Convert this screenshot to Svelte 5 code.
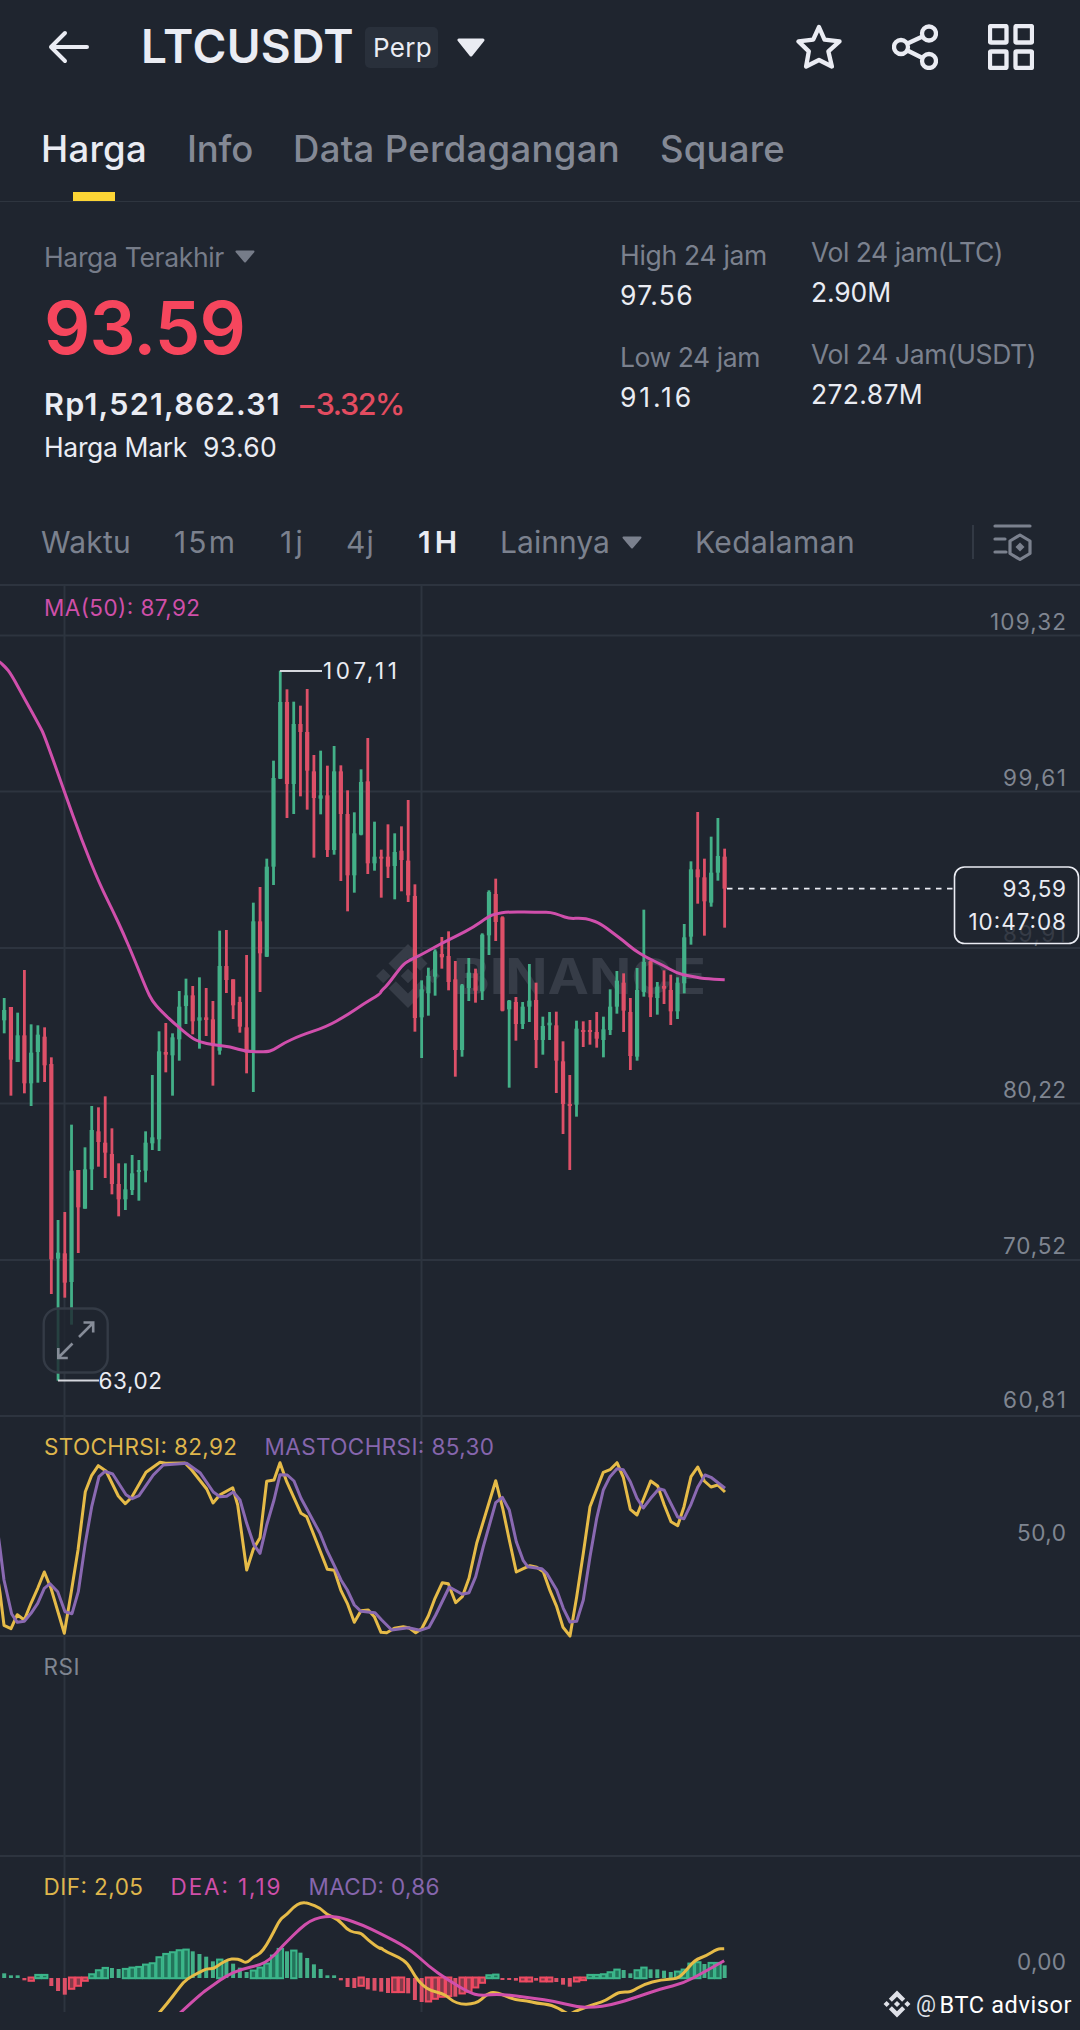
<script>
  // Spreads the glyphs of a label so that it takes exactly `width` pixels.
  function fit(node, width) {
    const count = [...node.textContent].length;
    const natural = node.getBoundingClientRect().width;
    const gap = (width - natural) / count;
    node.style.letterSpacing = `${gap}px`;
  }

  const tabs = [
    { label: 'Harga', width: 106, active: true },
    { label: 'Info', width: 66 },
    { label: 'Data Perdagangan', width: 327 },
    { label: 'Square', width: 125 }
  ];

  const stats = [
    [
      { label: 'High 24 jam', lw: 147, value: '97.56', vw: 74 },
      { label: 'Low 24 jam', lw: 140, value: '91.16', vw: 74 }
    ],
    [
      { label: 'Vol 24 jam(LTC)', lw: 192, value: '2.90M', vw: 80 },
      { label: 'Vol 24 Jam(USDT)', lw: 225, value: '272.87M', vw: 112 }
    ]
  ];

  // Candles: [high, body top, body bottom, low, up?]; y is in thirds of a pixel from `base`.
  const STEP = 6.733;
  const xAt = (i) => 4.2 + i * STEP;
  const groups = [
    [960, [
      [114,150,181,220,1],[141,141,299,407,0],[158,226,306,306,1],[30,226,370,400,0],[193,278,370,438,1],
      [196,224,276,368,1],[202,230,316,366,0],[292,312,898,1002,0],[780,878,896,1262,1],[756,880,968,1013,0],
      [494,632,966,1094,1],[630,630,742,879,0],[562,628,746,746,1],[438,510,628,690,1],[442,514,546,620,0],
      [409,548,578,654,0],[505,582,672,703,0],[610,672,718,769,0],[610,688,718,750,1],[585,640,690,705,1],
      [600,630,636,722,1],[514,548,632,667,1],[345,532,550,570,1],[214,274,538,573,1],[189,276,284,337,0],
      [220,232,286,407,1],[93,140,238,302,1],[56,106,138,192,1],[78,106,184,223,0],[52,172,182,266,1],
      [84,172,180,228,0],[123,178,256,377,0]
    ]],
    [580, [
      [1052,1158,1412,1424,1],[1050,1158,1200,1239,0],[1198,1198,1276,1317,0],[1250,1266,1340,1358,0],
      [1125,1342,1418,1480,0],[968,1024,1414,1536,1],[921,1024,1120,1236,0],[836,860,1130,1131,1],
      [542,594,860,915,1],[272,366,596,597,1],[328,366,612,714,0],[365,432,612,702,1],[377,432,456,649,0],
      [327,456,572,689,0],[525,574,654,833,0],[512,646,656,703,1],[557,646,810,831,0],[498,574,810,824,1],
      [556,574,702,903,0],[631,702,886,994,0],[697,760,886,938,1],[568,606,764,766,1],[474,604,850,882,0],
      [725,830,850,872,1]
    ]],
    [640, [
      [629,650,656,773,0],[553,650,680,714,0],[580,636,678,778,1],[559,632,660,754,0],[480,662,766,786,0],
      [733,768,1134,1175,0],[1021,1048,1132,1254,1],[983,1008,1060,1127,1],[928,934,1010,1067,1],
      [891,942,952,986,0],[874,948,1026,1051,0],[963,1018,1230,1310,0],[1032,1036,1230,1250,1],
      [954,998,1044,1083,1],[986,1000,1052,1088,0],[880,884,1054,1080,1],[751,756,886,945,1],
      [716,762,846,903,0],[829,832,1112,1114,0]
    ]],
    [840, [
      [480,482,508,743,1],[471,486,552,602,0],[486,500,552,567,1],[372,482,500,546,1],[428,480,600,684,0],
      [530,558,600,644,1],[516,548,556,600,1],[515,556,662,759,0],[604,664,792,882,0],[705,792,796,990,0],
      [542,566,794,830,1],[544,570,576,621,0],[540,570,576,614,0],[516,576,596,623,0],[530,568,600,652,1],
      [448,500,570,585,1],[393,422,500,521,1],[400,428,512,576,0],[474,516,648,690,0],[384,450,650,662,1],
      [209,366,456,470,1],[362,364,472,531,0],[426,440,474,524,1],[391,438,446,492,0],[404,450,514,555,0],
      [412,428,514,537,1],[252,292,430,460,1],[64,88,290,314,1],[-84,88,112,191,0],[56,112,184,287,0],
      [-10,98,188,200,1],[-66,48,98,122,1],[26,50,146,263,0]
    ]]
  ];
  const candles = groups
    .flatMap(([base, rows]) =>
      rows.map(([h, t, b, l, up]) => ({ h: base + h / 3, t: base + t / 3, b: base + b / 3, l: base + l / 3, up }))
    )
    .map((c, i) => ({ ...c, x: xAt(i) }));

  // Histogram heights in thirds of a pixel; `h` marks a hollow bar.
  const macd = (
    '14 8 8 -7 -12h 12h 12h -24 -39 -50 -36h -27h -12h 14h 26h 33h 30 27 30h 34h 36h 43h 47h 65h 75h 80h 86h 88h ' +
    '80 72 64 50 58h 54 43 31 18 25h 34h 46h 70h 90h 80 85h 76 60 41 27 8 8 -7 -27 -30 -27h -34 -38 -41 -45 -46h ' +
    '-46h -46 -66 -72 -74h -66h -60h -58h -56 -50h -45h -32h -18h 11h 13h -6 -6 -8 -14h -14h -8 -14h -14h -12 -20 ' +
    '-26 -14h -10h 12h 12h 14h 20h 28h 24 14 26h 34h 26 26 22 18 22h 28h 46h 50h 42 48h 48h 38'
  )
    .split(' ')
    .map((s, i) => ({ v: parseFloat(s) / 3, hollow: s.endsWith('h'), x: xAt(i) }));

  // Joins series segments [x origin, y origin, x scale, points] into one path.
  function line(segments, smooth) {
    const pts = segments.flatMap(([ox, oy, sx, text]) =>
      text.split(' ').map((p) => {
        const [x, y] = p.split(',').map(Number);
        return [ox + x / sx, oy + y / 3];
      })
    );
    let d = `M${pts[0][0].toFixed(1)} ${pts[0][1].toFixed(1)}`;
    for (let i = 1; i < pts.length; i++) {
      const [x, y] = pts[i];
      if (!smooth || i === pts.length - 1) {
        d += `L${x.toFixed(1)} ${y.toFixed(1)}`;
      } else {
        const mx = (x + pts[i + 1][0]) / 2;
        const my = (y + pts[i + 1][1]) / 2;
        d += `Q${x.toFixed(1)} ${y.toFixed(1)} ${mx.toFixed(1)} ${my.toFixed(1)}`;
      }
    }
    return d;
  }

  const ma = line([
    [0, 580, 3, '-6,243 0,247 15,260 33,282 73,355 120,440 133,466 193,634 245,780 300,915 340,995 370,1060 400,1130 440,1230 457,1263 480,1290 520,1328 575,1374 600,1386 640,1395 690,1400 740,1415 800,1416 820,1410 850,1390 900,1367 980,1340 1040,1306 1090,1272 1140,1242'],
    [240, 640, 3, '423,1054 445,1032 480,984 500,965 544,944 605,910 650,888 700,862 745,830 767,821 805,815 900,817'],
    [400, 840, 3, '450,216 480,226 508,236 545,234 570,239 600,250 640,280 670,302 700,328 740,353 790,376 830,400 870,408 910,416 974,419']
  ], true);
  const stoch = line([
    [0, 1410, 3, '-6,510 0,548 12,646 33,656 52,614 73,630 93,580 113,535 133,486 153,535 193,670 214,545 234,420 256,245 275,196 295,167 318,183 355,258 376,281 395,262 438,187 480,157 497,160 555,159 575,180 620,237 639,279 660,254 698,233 713,285 740,480 760,418 780,383 800,214 822,210 840,158 860,215 903,310 920,320 982,478 1003,481 1023,542 1042,580 1063,637 1083,602 1105,600 1123,620 1143,667'],
    [380, 1410, 3, '20,668 43,655 70,650 88,654 107,668 125,656 145,618 165,565 187,518 205,521 227,578 247,560 267,505 290,400 347,212 368,295 388,390 409,486 430,476 450,467 470,472 490,485 510,542 530,590 549,652 570,678 590,560 610,430 630,290 650,238 670,187 690,179 711,158 730,202 751,298 771,315 792,263 812,213 833,228 853,285 873,335 893,347 912,290 933,200 953,171 973,213 993,231 1013,225 1035,246']
  ], false);
  const maStoch = line([
    [0, 1410, 3, '-6,370 0,415 12,510 35,612 52,637 73,634 93,610 113,580 133,535 150,521 173,545 195,605 216,611 235,545 256,400 275,290 297,200 315,184 338,192 378,254 397,266 417,257 460,195 490,165 560,160 600,188 640,246 660,260 680,259 700,246 720,270 740,340 762,405 780,430 800,345 822,270 840,194 862,195 882,213 903,265 960,370 980,420 1003,467 1023,510 1042,540 1063,585 1083,604 1125,608 1145,630'],
    [380, 1410, 3, '35,660 85,653 120,661 147,652 167,615 208,531 247,553 267,548 287,500 310,410 347,278 367,262 388,300 409,395 430,452 443,470 485,476 500,490 530,540 550,595 570,636 590,634 610,570 630,440 650,325 670,240 690,200 711,176 730,179 751,215 771,265 790,294 812,265 837,236 853,241 893,321 912,326 933,283 953,232 975,195 993,202 1035,235']
  ], false);
  const dif = line([
    [0, 1850, 3, '470,497 500,463 540,410 560,387 600,366 620,356 640,357 660,342 685,328 705,326 722,330 740,340 760,320 780,312 800,285 820,248 840,208 860,194 880,172 903,157 925,159 962,175 980,194 1015,208 1040,238 1063,248 1083,248 1103,270 1143,298'],
    [380, 1850, 2.24, '0,292 15,306 42,322 62,340 78,378 95,406 115,423 145,432 170,462 215,463 240,432 258,425 300,449 330,452 350,460 385,464 415,487 424,494 432,487 460,472 485,461 505,452 530,430 545,425 562,427 590,403 630,389 665,387 680,370 705,330 730,318 755,297 771,296']
  ], true);
  const dea = line([
    [0, 1850, 3, '535,494 600,433 640,405 680,377 720,359 780,345 810,328 840,297 860,275 900,236 930,213 960,202 990,199 1025,203 1090,226'],
    [380, 1850, 2.24, '0,250 65,295 110,350 150,388 200,428 225,437 270,432 340,444 395,455 440,471 480,472 515,466 560,448 630,416 680,400 725,367 771,332']
  ], true);

  const gridRows = [585, 635.5, 791.5, 948, 1103.5, 1260, 1416, 1636, 1856];
  const axis = [
    { text: '109,32', y: 630, w: 76 },
    { text: '99,61', y: 786, w: 63 },
    { text: '89,91', y: 942, w: 63, faint: true },
    { text: '80,22', y: 1098, w: 63 },
    { text: '70,52', y: 1254, w: 63 },
    { text: '60,81', y: 1408, w: 63 },
    { text: '50,0', y: 1541, w: 49 },
    { text: '0,00', y: 1970, w: 49 }
  ];
  const legends = [
    { text: 'MA(50): 87,92', x: 44, y: 615.7, w: 156, tone: 'pink' },
    { text: 'STOCHRSI: 82,92', x: 44, y: 1455.3, w: 193, tone: 'yellow' },
    { text: 'MASTOCHRSI: 85,30', x: 264.5, y: 1455.3, w: 229.5, tone: 'purple' },
    { text: 'RSI', x: 43.5, y: 1675.3, w: 36, tone: 'grey' },
    { text: 'DIF: 2,05', x: 43.5, y: 1895.3, w: 99.5, tone: 'yellow' },
    { text: 'DEA: 1,19', x: 170.5, y: 1895.3, w: 110, tone: 'pink' },
    { text: 'MACD: 0,86', x: 308.500, y: 1895.3, w: 131, tone: 'purple' }
  ];
</script>

<main>
  <header>
    <svg class="back" viewBox="0 0 42 34" width="42" height="34"><path d="M39 17H3M17 3 3 17l14 14" /></svg>
    <h1><span use:fit={213}>LTCUSDT</span></h1>
    <span class="perp"><span use:fit={59}>Perp</span></span>
    <svg class="caret" viewBox="0 0 28 19" width="28" height="19"><path d="M2 2h24L14 17z" /></svg>
    <svg class="icon star" viewBox="0 0 46 46" width="46" height="46">
      <path d="M23 3l5.500 12.600 15 1.800-11.100 10 3.500 15.100L23 36 10.100 42.500l2.700-15.100L2.500 17.400l14.700-1.800z" />
    </svg>
    <svg class="icon share" viewBox="0 0 46 46" width="46" height="46">
      <circle cx="9" cy="23" r="7" /><circle cx="37" cy="9.500" r="7" /><circle cx="37" cy="37" r="7" />
      <path d="M15.500 19.500 30.500 12.500M15.500 26.500l15 7.500" />
    </svg>
    <svg class="icon" viewBox="0 0 46 46" width="46" height="46">
      <rect x="2" y="2" width="16.500" height="16.500" rx="1" /><rect x="27.500" y="2" width="16.500" height="16.500" rx="1" />
      <rect x="2" y="27.500" width="16.500" height="16.500" rx="1" /><rect x="27.500" y="27.500" width="16.500" height="16.500" rx="1" />
    </svg>
  </header>

  <nav class="tabs">
    {#each tabs as tab}
      <span class="tab" class:active={tab.active}><span use:fit={tab.width}>{tab.label}</span></span>
    {/each}
  </nav>

  <section class="summary">
    <div class="price">
      <div class="kind">
        <span use:fit={180}>Harga Terakhir</span>
        <svg viewBox="0 0 20 13" width="20" height="13"><path d="M1.500 1.500h17L10 11.500z" /></svg>
      </div>
      <div class="last"><span use:fit={201}>93.59</span></div>
      <div class="fiat"><span use:fit={237}>Rp1,521,862.31</span><b class="change"><span use:fit={107}>−3.32%</span></b></div>
      <div class="mark"><span use:fit={143}>Harga Mark</span><span class="mark-value"><span use:fit={74}>93.60</span></span></div>
    </div>
    {#each stats as column, c}
      <dl class="stats" class:second={c === 1}>
        {#each column as s}
          <dt><span use:fit={s.lw}>{s.label}</span></dt>
          <dd><span use:fit={s.vw}>{s.value}</span></dd>
        {/each}
      </dl>
    {/each}
  </section>

  <nav class="frames">
    <span class="f waktu"><span use:fit={90}>Waktu</span></span>
    <span class="f m15"><span use:fit={63}>15m</span></span>
    <span class="f j1"><span use:fit={26}>1j</span></span>
    <span class="f j4"><span use:fit={29}>4j</span></span>
    <span class="f h1"><span use:fit={43}>1H</span></span>
    <span class="f more">
      <span use:fit={110}>Lainnya</span>
      <svg viewBox="0 0 20 13" width="20" height="13"><path d="M1.500 1.500h17L10 11.500z" /></svg>
    </span>
    <span class="f depth"><span use:fit={160}>Kedalaman</span></span>
    <span class="divider"></span>
    <svg class="tune" viewBox="0 0 39 38" width="39" height="38">
      <path d="M2 3h35M2 16h10M2 29h11" />
      <path d="M27 12l10 6v12.500l-10 6-10-6V18z" />
      <path class="dot" d="M27 19.500l4.500 4.500-4.500 4.500-4.500-4.500z" />
    </svg>
  </nav>

  <svg class="chart" viewBox="0 584 1080 1446" width="1080" height="1446">
    <defs>
      <g id="diamond">
        <path d="M0-32 19.500-12.500 12.200-5.200 0-17.400-12.200-5.200-19.500-12.500z" />
        <path d="M0 32 19.500 12.500 12.200 5.200 0 17.400-12.200 5.200-19.500 12.500z" />
        <path d="M-32 0l7.300-7.300L-17.400 0l-7.300 7.300zM32 0l-7.300-7.300L17.400 0l7.300 7.300zM0-7.300 7.300 0 0 7.300-7.300 0z" />
      </g>
      <clipPath id="plot"><rect x="0" y="584" width="1080" height="1428" /></clipPath>
    </defs>

    <g class="grid">
      {#each gridRows as y}<path d="M0 {y}H1080" />{/each}
      <path d="M64.500 585V2012M421.500 585V2012" />
    </g>

    <g class="watermark">
      <use href="#diamond" x="408" y="976" />
      <text x="453" y="994" textLength="253" lengthAdjust="spacingAndGlyphs">BINANCE</text>
    </g>

    {#each candles as c}
      <g class={c.up ? 'up' : 'down'}>
        <rect x={c.x - 1.4} y={c.h} width="2.8" height={c.l - c.h} />
        <rect x={c.x - 2.1} y={c.t} width="4.2" height={Math.max(c.b - c.t, 2)} />
      </g>
    {/each}

    {#each macd as b}
      <g class={b.v > 0 ? 'up' : 'down'}>
        {#if b.hollow}
          <rect class="hollow" x={b.x - 2.6} y={b.v > 0 ? 1978 - b.v + 0.9 : 1977.5} width="5.4" height={Math.max(Math.abs(b.v) - 0.7, 1)} />
        {:else}
          <rect x={b.x - 2} y={b.v > 0 ? 1978 - b.v : 1978} width="4" height={Math.abs(b.v)} />
        {/if}
      </g>
    {/each}

    <g class="lines" clip-path="url(#plot)">
      <path class="s-pink" d={ma} />
      <path class="s-yellow" d={stoch} />
      <path class="s-purple" d={maStoch} />
      <path class="s-yellow" d={dif} />
      <path class="s-pink" d={dea} />
    </g>

    {#each legends as l}
      <text class="label {l.tone}" x={l.x} y={l.y} textLength={l.w}>{l.text}</text>
    {/each}
    {#each axis as a}
      <text class="label grey" class:faint={a.faint} x={1066 - a.w} y={a.y} textLength={a.w}>{a.text}</text>
    {/each}

    <path class="callout" d="M280 671h42M58 1380.500h41" />
    <text class="label white" x="323" y="679" textLength="74">107,11</text>
    <text class="label white" x="98.500" y="1388.500" textLength="63.500">63,02</text>

    <path class="dashes" d="M727 888.700H953" />
    <rect class="tag" x="954.500" y="867" width="124" height="76.500" rx="10" />
    <text class="label white" x="1002.500" y="897.300" textLength="63.500">93,59</text>
    <text class="label white" x="968.500" y="930" textLength="97.500">10:47:08</text>

    <g class="expand">
      <rect x="43.700" y="1308.500" width="64" height="64" rx="15" />
      <path d="M79 1337l14-14M83.500 1322.500h9.700v10M72.500 1343.500l-14 14M58.300 1348v10h9.500" />
    </g>

    <g class="credit">
      <use href="#diamond" transform="translate(897 2004) scale(.42)" />
      <text x="916" y="2012" textLength="20" lengthAdjust="spacingAndGlyphs">@</text>
      <text class="name" x="939.500" y="2012.500" textLength="132">BTC advisor</text>
    </g>
  </svg>
</main>

<style>
  :global(body) { background: #1f252f; }
  main { width: 1080px; height: 2030px; overflow: hidden; background: #1f252f; color: #eaecf3; font-family: Inter, "Noto Sans", sans-serif; white-space: nowrap; }
  svg { display: block; flex: none; }

  header { display: flex; align-items: center; height: 94px; box-sizing: border-box; padding: 0 46px 0 48px; }
  .back { fill: none; stroke: #eaecf3; stroke-width: 4; stroke-linecap: round; stroke-linejoin: round; }
  h1 { margin: 0 0 0 51px; width: 213px; padding-bottom: 3px; font-size: 46px; line-height: 56px; font-weight: 600; }
  .perp { margin-left: 11px; width: 73px; height: 41px; box-sizing: border-box; padding-left: 8px; border-radius: 5px; background: #29303b; font-size: 26px; line-height: 41px; }
  .caret { margin-left: 19px; fill: #eaecf3; stroke: #eaecf3; stroke-width: 3; stroke-linejoin: round; }
  .icon { fill: none; stroke: #eaecf3; stroke-width: 4.300; stroke-linejoin: round; margin-left: 50px; }
  .star { margin-left: auto; }

  .tabs { display: flex; gap: 40px; height: 108px; box-sizing: border-box; padding-left: 41px; border-bottom: 1px solid #2e353f; font-size: 36.500px; line-height: 110px; color: #848995; font-weight: 500; }
  .tab { position: relative; height: 107px; }
  .active { color: #eaecf3; }
  .active::after { content: ''; position: absolute; left: 32px; bottom: 0; width: 42px; height: 9px; background: #fcd535; }

  .summary { display: flex; height: 298px; box-sizing: border-box; padding: 32.500px 0 0 44px; }
  .price { width: 576px; padding-top: 2px; }
  .kind { display: flex; align-items: center; gap: 11px; font-size: 26.500px; line-height: 40px; color: #767c89; }
  .kind svg, .more svg { fill: currentColor; stroke: currentColor; stroke-width: 2; stroke-linejoin: round; }
  .last { font-size: 72.500px; line-height: 98px; font-weight: 600; color: #f6465d; padding-top: 2px; }
  .fiat { font-size: 30.500px; line-height: 54px; font-weight: 600; }
  .change { margin-left: 16px; color: #e34c60; font-weight: 500; }
  .mark { font-size: 26.500px; line-height: 33px; }
  .mark-value { margin-left: 16px; }
  .stats { margin: 0; width: 191px; font-size: 26.500px; line-height: 40px; }
  .second { margin-top: -3px; }
  dt { color: #7b818e; }
  dd { margin: 0 0 22px; line-height: 40px; }

  .frames { display: flex; align-items: center; height: 84px; font-size: 30px; line-height: 86px; color: #7b818e; padding-left: 41px; }
  .waktu { width: 133px; }
  .m15 { width: 106px; }
  .j1 { width: 66px; }
  .j4 { width: 72px; }
  .h1 { width: 82px; color: #eaecf3; font-weight: 600; }
  .more { width: 195px; display: flex; align-items: center; gap: 12px; }
  .depth { width: 277px; }
  .divider { width: 2px; height: 34px; background: #323944; }
  .tune { margin-left: 19px; fill: none; stroke: #7b818e; stroke-width: 3.200; stroke-linecap: round; stroke-linejoin: round; }
  .tune .dot { fill: #7b818e; stroke: none; }

  .chart { font-family: Inter, "Noto Sans", sans-serif; }
  .grid path { stroke: #2d343f; stroke-width: 2; fill: none; }
  .watermark { fill: #363c47; }
  .watermark text { font-size: 49.500px; font-weight: 700; }
  .up { fill: #43b088; stroke: none; }
  .down { fill: #dd5068; stroke: none; }
  .up .hollow { fill: #23745b; stroke: #3bb68a; stroke-width: 2; }
  .down .hollow { fill: #853a4a; stroke: #ee4a62; stroke-width: 2; }
  .lines path { fill: none; stroke-width: 3; stroke-linejoin: round; }
  .s-pink { stroke: #d04fac; }
  .s-yellow { stroke: #e6bb48; }
  .s-purple { stroke: #8a69b2; }
  .label { font-size: 22.500px; }
  .pink { fill: #cf4fa9; }
  .yellow { fill: #dfb64c; }
  .purple { fill: #8666ad; }
  .grey { fill: #7f8591; }
  .faint { opacity: .8; }
  .white { fill: #eaecf3; }
  .callout { stroke: #d5d7dd; stroke-width: 2; fill: none; }
  .dashes { stroke: #eaecf3; stroke-width: 1.800; stroke-dasharray: 5.500 5.500; }
  .tag { fill: #1f252f; fill-opacity: .7; stroke: #eaecf3; stroke-width: 1.600; }
  .expand rect { fill: #1f252f; fill-opacity: .8; stroke: #343b46; stroke-width: 2.400; }
  .expand path { fill: none; stroke: #868c98; stroke-width: 2.600; }
  .credit { fill: #dfe1e8; font-family: Roboto, sans-serif; font-size: 23.500px; }
  .credit .name { fill: #fff; }
</style>
